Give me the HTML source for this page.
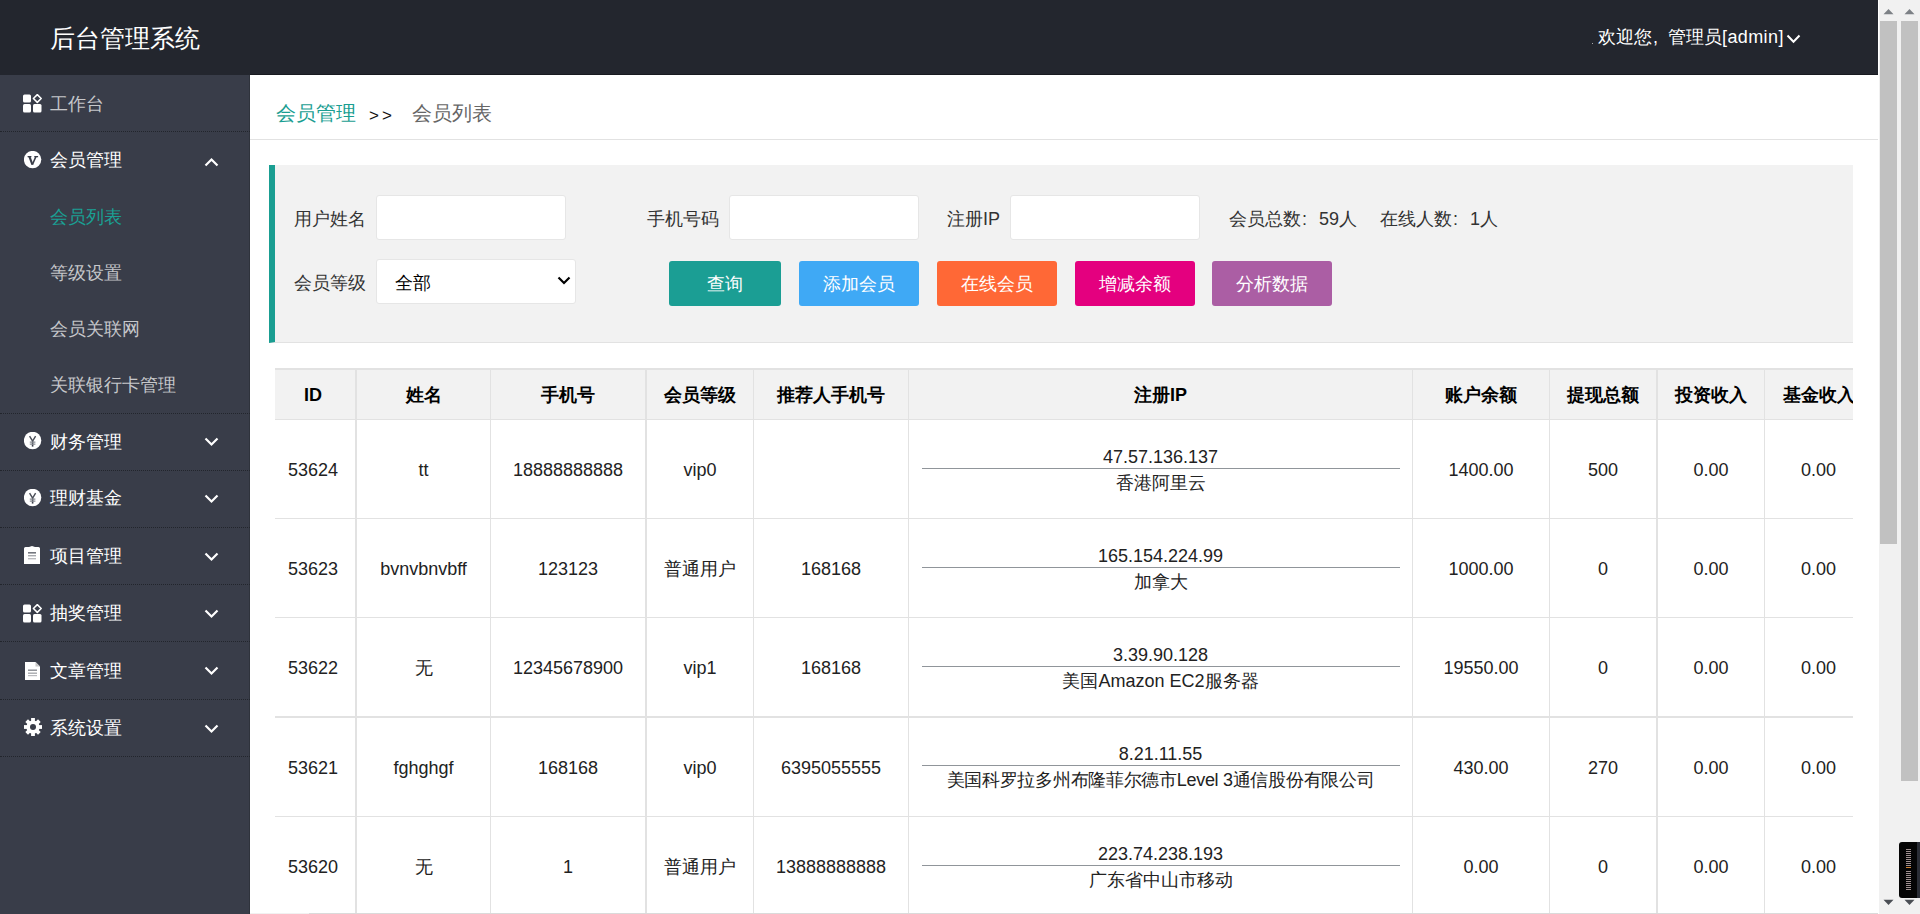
<!DOCTYPE html>
<html><head><meta charset="utf-8">
<style>
*{box-sizing:border-box;margin:0;padding:0}
html,body{width:1920px;height:914px;overflow:hidden;background:#fff;font-family:"Liberation Sans",sans-serif;color:#333}
.abs{position:absolute}
#hdr{position:absolute;left:0;top:0;width:1878px;height:75px;background:#23262E}
#logo{position:absolute;left:50px;top:20px;font-size:25px;line-height:36px;color:#fff;white-space:nowrap}
#user{position:absolute;left:1598px;top:24px;font-size:18px;line-height:26px;color:#fff;white-space:nowrap}
#side{position:absolute;left:0;top:75px;width:250px;height:839px;background:#393D49}
.sep{position:absolute;left:0;width:250px;height:0;border-top:1px dotted #22252c}
.nav{position:absolute;left:50px;font-size:18px;line-height:24px;white-space:nowrap;color:#fff}
.sub{color:rgba(255,255,255,.72)}
.ico{position:absolute;left:23px}
.chev{position:absolute;left:204px}
#main{position:absolute;left:250px;top:75px;width:1628px;height:839px;background:#fff;overflow:hidden}

.bc{font-size:20px;line-height:28px;white-space:nowrap}
.lbl{font-size:18px;line-height:26px;white-space:nowrap;color:#333}
.inp{height:45px;background:#fff;border:1px solid #e6e6e6;border-radius:3px}
.btn{top:261px;height:45px;border-radius:3px;color:#fff;font-size:18px;line-height:47px;text-align:center;white-space:nowrap}

.hl{left:0;width:1578px;background:#e2e2e2}
.vl{top:368px;height:546px;background:#e2e2e2}
.th{width:200px;text-align:center;font-size:18px;line-height:26px;font-weight:bold;color:#000;white-space:nowrap}
.td{width:200px;text-align:center;font-size:18px;line-height:26px;color:#222;white-space:nowrap}
.ipr{width:478px;height:1px;background:#90959a}
.fw{display:inline-block;width:18px;text-indent:1px}
</style></head><body>
<div id="hdr">
  <div id="logo">后台管理系统</div>
  <div id="user">欢迎您<span class="fw" style="width:16px">,</span>管理员<span style="letter-spacing:0.4px">[admin]</span></div>
</div>
<div id="side"></div>

<!-- sidebar -->
<div class="abs" style="left:249px;top:75px;width:1px;height:839px;background:#2f333c"></div>
<div class="abs" style="left:250px;top:74px;width:1628px;height:1px;background:#181a20"></div>
<svg class="ico" style="left:23px;top:94px" width="19" height="19" viewBox="0 0 19 19"><rect x="0" y="0.5" width="8" height="8" rx="1.5" fill="#fff"/><rect x="0" y="10" width="8" height="8.5" rx="1.5" fill="#fff"/><rect x="10" y="10" width="8.5" height="8.5" rx="1.5" fill="#fff"/><path d="M14.3 0.6 L18.2 4.5 L14.3 8.4 L10.4 4.5 Z" fill="none" stroke="#fff" stroke-width="1.5" stroke-linejoin="round"/></svg>
<div class="nav sub" style="top:92px">工作台</div>
<div class="sep" style="top:131px"></div>
<svg class="ico" style="left:24px;top:151px" width="18" height="18" viewBox="0 0 18 18"><circle cx="8.6" cy="8.6" r="8.7" fill="#fff"/><path d="M5.4 5.6 L8.4 13.6" stroke="#393D49" stroke-width="2.1" fill="none"/><path d="M8.4 13.6 L11.9 5.6" stroke="#393D49" stroke-width="1.5" fill="none"/><path d="M3.6 5.6 H7.4 M10.3 5.6 H14.1" stroke="#393D49" stroke-width="1.3" fill="none"/></svg>
<div class="nav" style="top:148px">会员管理</div>
<svg class="chev" style="left:204px;top:157px" width="15" height="10" viewBox="0 0 15 10"><path d="M1.5 8.5 L7.5 2.5 L13.5 8.5" fill="none" stroke="#fff" stroke-width="2.2"/></svg>
<div class="nav" style="top:205px;color:#1aa094">会员列表</div>
<div class="nav sub" style="top:261px">等级设置</div>
<div class="nav sub" style="top:317px">会员关联网</div>
<div class="nav sub" style="top:373px">关联银行卡管理</div>
<div class="sep" style="top:413px"></div>
<svg class="ico" style="left:24px;top:432px" width="18" height="18" viewBox="0 0 18 18"><circle cx="8.6" cy="8.5" r="8.7" fill="#fff"/><path d="M5.6 4.2 L8.6 9.2 L11.6 4.2" fill="none" stroke="#4a4e58" stroke-width="1.4"/><path d="M8.6 9.2 V14.6" fill="none" stroke="#393D49" stroke-width="1.6"/><path d="M5.8 10.2 H11.4 M5.8 12.2 H11.4" fill="none" stroke="#8a8d94" stroke-width="1.2"/></svg><div class="nav" style="top:430px">财务管理</div><svg class="chev" style="left:204px;top:437px" width="15" height="10" viewBox="0 0 15 10"><path d="M1.5 1.5 L7.5 7.5 L13.5 1.5" fill="none" stroke="#fff" stroke-width="2.2"/></svg><div class="sep" style="top:470px"></div>
<svg class="ico" style="left:24px;top:489px" width="18" height="18" viewBox="0 0 18 18"><circle cx="8.6" cy="8.5" r="8.7" fill="#fff"/><path d="M5.6 4.2 L8.6 9.2 L11.6 4.2" fill="none" stroke="#4a4e58" stroke-width="1.4"/><path d="M8.6 9.2 V14.6" fill="none" stroke="#393D49" stroke-width="1.6"/><path d="M5.8 10.2 H11.4 M5.8 12.2 H11.4" fill="none" stroke="#8a8d94" stroke-width="1.2"/></svg><div class="nav" style="top:486px">理财基金</div><svg class="chev" style="left:204px;top:494px" width="15" height="10" viewBox="0 0 15 10"><path d="M1.5 1.5 L7.5 7.5 L13.5 1.5" fill="none" stroke="#fff" stroke-width="2.2"/></svg><div class="sep" style="top:527px"></div>
<svg class="ico" style="left:24px;top:546px" width="16" height="18" viewBox="0 0 16 18"><path d="M1.5 1 H5 L8 0 L11 1 H14.5 Q16 1 16 2.5 V18 H0 V2.5 Q0 1 1.5 1 Z" fill="#fff"/><rect x="4" y="6" width="8" height="1.6" fill="#393D49" opacity=".7"/><rect x="4" y="9" width="8" height="1.4" fill="#393D49" opacity=".45"/><rect x="4" y="12" width="8" height="1.4" fill="#393D49" opacity=".35"/></svg><div class="nav" style="top:544px">项目管理</div><svg class="chev" style="left:204px;top:552px" width="15" height="10" viewBox="0 0 15 10"><path d="M1.5 1.5 L7.5 7.5 L13.5 1.5" fill="none" stroke="#fff" stroke-width="2.2"/></svg><div class="sep" style="top:584px"></div>
<svg class="ico" style="left:23px;top:604px" width="19" height="19" viewBox="0 0 19 19"><rect x="0" y="0.5" width="8" height="8" rx="1.5" fill="#fff"/><rect x="0" y="10" width="8" height="8.5" rx="1.5" fill="#fff"/><rect x="10" y="10" width="8.5" height="8.5" rx="1.5" fill="#fff"/><path d="M14.3 0.6 L18.2 4.5 L14.3 8.4 L10.4 4.5 Z" fill="none" stroke="#fff" stroke-width="1.5" stroke-linejoin="round"/></svg><div class="nav" style="top:601px">抽奖管理</div><svg class="chev" style="left:204px;top:609px" width="15" height="10" viewBox="0 0 15 10"><path d="M1.5 1.5 L7.5 7.5 L13.5 1.5" fill="none" stroke="#fff" stroke-width="2.2"/></svg><div class="sep" style="top:641px"></div>
<svg class="ico" style="left:25px;top:662px" width="15" height="18" viewBox="0 0 15 18"><path d="M0 0 H10.5 L15 4.5 V18 H0 Z" fill="#fff"/><path d="M10.5 0 V4.5 H15" fill="#c8c8c8"/><rect x="3" y="7.5" width="9" height="1.4" fill="#393D49" opacity=".6"/><rect x="3" y="10.5" width="9" height="1.4" fill="#393D49" opacity=".45"/><rect x="3" y="13" width="9" height="1.2" fill="#393D49" opacity=".35"/></svg><div class="nav" style="top:659px">文章管理</div><svg class="chev" style="left:204px;top:666px" width="15" height="10" viewBox="0 0 15 10"><path d="M1.5 1.5 L7.5 7.5 L13.5 1.5" fill="none" stroke="#fff" stroke-width="2.2"/></svg><div class="sep" style="top:699px"></div>
<svg class="ico" style="left:24px;top:718px" width="18" height="18" viewBox="0 0 18 18"><g transform="translate(9 9)" fill="#fff"><rect x="-1.9" y="-9" width="3.8" height="4" transform="rotate(0)"/><rect x="-1.9" y="-9" width="3.8" height="4" transform="rotate(45)"/><rect x="-1.9" y="-9" width="3.8" height="4" transform="rotate(90)"/><rect x="-1.9" y="-9" width="3.8" height="4" transform="rotate(135)"/><rect x="-1.9" y="-9" width="3.8" height="4" transform="rotate(180)"/><rect x="-1.9" y="-9" width="3.8" height="4" transform="rotate(225)"/><rect x="-1.9" y="-9" width="3.8" height="4" transform="rotate(270)"/><rect x="-1.9" y="-9" width="3.8" height="4" transform="rotate(315)"/><circle r="6.6"/></g><circle cx="9" cy="9" r="3" fill="#393D49"/></svg><div class="nav" style="top:716px">系统设置</div><svg class="chev" style="left:204px;top:724px" width="15" height="10" viewBox="0 0 15 10"><path d="M1.5 1.5 L7.5 7.5 L13.5 1.5" fill="none" stroke="#fff" stroke-width="2.2"/></svg><div class="sep" style="top:756px"></div>

<div id="main"></div>

<!-- breadcrumb -->
<div class="abs" style="left:250px;top:139px;width:1628px;height:1px;background:#e2e2e2"></div>
<div class="abs bc" style="left:276px;top:99px;color:#1a9e92">会员管理</div>
<div class="abs bc" style="left:369px;top:102px;color:#111;font-size:17px;letter-spacing:3px">&gt;&gt;</div>
<div class="abs bc" style="left:412px;top:99px;color:#666">会员列表</div>
<!-- search panel -->
<div class="abs" style="left:269px;top:165px;width:1584px;height:178px;background:#f2f2f2;border-left:6px solid #1a9e92;border-bottom:1px solid #e2e2e2"></div>
<div class="abs lbl" style="left:294px;top:206px">用户姓名</div>
<div class="abs inp" style="left:376px;top:195px;width:190px"></div>
<div class="abs lbl" style="left:647px;top:206px">手机号码</div>
<div class="abs inp" style="left:729px;top:195px;width:190px"></div>
<div class="abs lbl" style="left:947px;top:206px">注册IP</div>
<div class="abs inp" style="left:1010px;top:195px;width:190px"></div>
<div class="abs lbl" style="left:1229px;top:206px">会员总数<span class="fw">:</span>59人</div>
<div class="abs lbl" style="left:1380px;top:206px">在线人数<span class="fw">:</span>1人</div>
<div class="abs lbl" style="left:294px;top:270px">会员等级</div>
<div class="abs inp" style="left:376px;top:259px;width:200px"></div>
<div class="abs lbl" style="left:395px;top:270px;color:#000">全部</div>
<svg class="abs" style="left:557px;top:276px" width="14" height="9" viewBox="0 0 14 9"><path d="M1.5 1.5 L7 7 L12.5 1.5" fill="none" stroke="#000" stroke-width="2.2"/></svg>
<div class="abs btn" style="left:669px;width:112px;background:#1b9e94">查询</div>
<div class="abs btn" style="left:799px;width:120px;background:#3fa9f5">添加会员</div>
<div class="abs btn" style="left:937px;width:120px;background:#ff6836">在线会员</div>
<div class="abs btn" style="left:1075px;width:120px;background:#e4007f">增减余额</div>
<div class="abs btn" style="left:1212px;width:120px;background:#ab5ea4">分析数据</div>

<!-- table -->
<div id="tbl" class="abs" style="left:275px;top:0;width:1578px;height:914px;overflow:hidden">
<div class="abs" style="left:0;top:370px;width:1578px;height:49px;background:#f2f2f2"></div>
<div class="abs hl" style="top:368px;height:2px"></div>
<div class="abs hl" style="top:419px;height:1px"></div>
<div class="abs hl" style="top:518px;height:1px"></div>
<div class="abs hl" style="top:617px;height:1px"></div>
<div class="abs hl" style="top:716px;height:2px"></div>
<div class="abs hl" style="top:816px;height:1px"></div>

<div class="abs vl" style="left:80px;width:2px"></div>
<div class="abs vl" style="left:215px;width:1px"></div>
<div class="abs vl" style="left:370px;width:2px"></div>
<div class="abs vl" style="left:478px;width:1px"></div>
<div class="abs vl" style="left:633px;width:1px"></div>
<div class="abs vl" style="left:1137px;width:1px"></div>
<div class="abs vl" style="left:1274px;width:1px"></div>
<div class="abs vl" style="left:1381px;width:2px"></div>
<div class="abs vl" style="left:1489px;width:1px"></div>
<div class="abs th" style="left:-62px;top:382px">ID</div>
<div class="abs th" style="left:48.5px;top:382px">姓名</div>
<div class="abs th" style="left:193px;top:382px">手机号</div>
<div class="abs th" style="left:325px;top:382px">会员等级</div>
<div class="abs th" style="left:456px;top:382px">推荐人手机号</div>
<div class="abs th" style="left:785.5px;top:382px">注册IP</div>
<div class="abs th" style="left:1106px;top:382px">账户余额</div>
<div class="abs th" style="left:1228px;top:382px">提现总额</div>
<div class="abs th" style="left:1336px;top:382px">投资收入</div>
<div class="abs th" style="left:1443.5px;top:382px">基金收入</div>
<div class="abs td" style="left:-62px;top:457px">53624</div>
<div class="abs td" style="left:48.5px;top:457px">tt</div>
<div class="abs td" style="left:193px;top:457px">18888888888</div>
<div class="abs td" style="left:325px;top:457px">vip0</div>
<div class="abs td" style="left:635.5px;width:500px;top:444px">47.57.136.137</div>
<div class="abs ipr" style="left:647px;top:468px"></div>
<div class="abs td" style="left:635.5px;width:500px;top:470px">香港阿里云</div>
<div class="abs td" style="left:1106px;top:457px">1400.00</div>
<div class="abs td" style="left:1228px;top:457px">500</div>
<div class="abs td" style="left:1336px;top:457px">0.00</div>
<div class="abs td" style="left:1443.5px;top:457px">0.00</div>
<div class="abs td" style="left:-62px;top:556px">53623</div>
<div class="abs td" style="left:48.5px;top:556px">bvnvbnvbff</div>
<div class="abs td" style="left:193px;top:556px">123123</div>
<div class="abs td" style="left:325px;top:556px">普通用户</div>
<div class="abs td" style="left:456px;top:556px">168168</div>
<div class="abs td" style="left:635.5px;width:500px;top:543px">165.154.224.99</div>
<div class="abs ipr" style="left:647px;top:567px"></div>
<div class="abs td" style="left:635.5px;width:500px;top:569px">加拿大</div>
<div class="abs td" style="left:1106px;top:556px">1000.00</div>
<div class="abs td" style="left:1228px;top:556px">0</div>
<div class="abs td" style="left:1336px;top:556px">0.00</div>
<div class="abs td" style="left:1443.5px;top:556px">0.00</div>
<div class="abs td" style="left:-62px;top:655px">53622</div>
<div class="abs td" style="left:48.5px;top:655px">无</div>
<div class="abs td" style="left:193px;top:655px">12345678900</div>
<div class="abs td" style="left:325px;top:655px">vip1</div>
<div class="abs td" style="left:456px;top:655px">168168</div>
<div class="abs td" style="left:635.5px;width:500px;top:642px">3.39.90.128</div>
<div class="abs ipr" style="left:647px;top:666px"></div>
<div class="abs td" style="left:635.5px;width:500px;top:668px">美国Amazon EC2服务器</div>
<div class="abs td" style="left:1106px;top:655px">19550.00</div>
<div class="abs td" style="left:1228px;top:655px">0</div>
<div class="abs td" style="left:1336px;top:655px">0.00</div>
<div class="abs td" style="left:1443.5px;top:655px">0.00</div>
<div class="abs td" style="left:-62px;top:755px">53621</div>
<div class="abs td" style="left:48.5px;top:755px">fghghgf</div>
<div class="abs td" style="left:193px;top:755px">168168</div>
<div class="abs td" style="left:325px;top:755px">vip0</div>
<div class="abs td" style="left:456px;top:755px">6395055555</div>
<div class="abs td" style="left:635.5px;width:500px;top:741px">8.21.11.55</div>
<div class="abs ipr" style="left:647px;top:765px"></div>
<div class="abs td" style="left:635.5px;width:500px;top:767px;letter-spacing:-0.3px">美国科罗拉多州布隆菲尔德市Level 3通信股份有限公司</div>
<div class="abs td" style="left:1106px;top:755px">430.00</div>
<div class="abs td" style="left:1228px;top:755px">270</div>
<div class="abs td" style="left:1336px;top:755px">0.00</div>
<div class="abs td" style="left:1443.5px;top:755px">0.00</div>
<div class="abs td" style="left:-62px;top:854px">53620</div>
<div class="abs td" style="left:48.5px;top:854px">无</div>
<div class="abs td" style="left:193px;top:854px">1</div>
<div class="abs td" style="left:325px;top:854px">普通用户</div>
<div class="abs td" style="left:456px;top:854px">13888888888</div>
<div class="abs td" style="left:635.5px;width:500px;top:841px">223.74.238.193</div>
<div class="abs ipr" style="left:647px;top:865px"></div>
<div class="abs td" style="left:635.5px;width:500px;top:867px">广东省中山市移动</div>
<div class="abs td" style="left:1106px;top:854px">0.00</div>
<div class="abs td" style="left:1228px;top:854px">0</div>
<div class="abs td" style="left:1336px;top:854px">0.00</div>
<div class="abs td" style="left:1443.5px;top:854px">0.00</div>
</div>

<!-- scrollbars -->
<div class="abs" style="left:250px;top:913px;width:1628px;height:1px;background:#f1f1f1"></div>
<div class="abs" style="left:309px;top:913px;width:1569px;height:1px;background:#dadada"></div>
<div class="abs" style="left:1878px;top:0;width:1px;height:914px;background:#fff"></div>
<div class="abs" style="left:1879px;top:0;width:41px;height:914px;background:#f1f1f1"></div>
<div class="abs" style="left:1880px;top:21px;width:17px;height:523px;background:#c1c1c1"></div>
<div class="abs" style="left:1901px;top:21px;width:17px;height:760px;background:#c1c1c1"></div>
<svg class="abs" style="left:1883px;top:8px" width="11" height="7" viewBox="0 0 11 7"><path d="M0.5 6.2 L5.5 1 L10.5 6.2 Z" fill="#7d8186"/></svg>
<svg class="abs" style="left:1904px;top:8px" width="11" height="7" viewBox="0 0 11 7"><path d="M0.5 6.2 L5.5 1 L10.5 6.2 Z" fill="#7d8186"/></svg>
<svg class="abs" style="left:1883px;top:899px" width="11" height="7" viewBox="0 0 11 7"><path d="M0.5 0.8 L5.5 6 L10.5 0.8 Z" fill="#4b4f55"/></svg>
<svg class="abs" style="left:1904px;top:899px" width="11" height="7" viewBox="0 0 11 7"><path d="M0.5 0.8 L5.5 6 L10.5 0.8 Z" fill="#4b4f55"/></svg>
<div class="abs" style="left:1899px;top:842px;width:21px;height:56px;background:#050505;border-radius:3px 0 0 3px;border-right:3px solid #2a2d35"></div>
<div class="abs" style="left:1906px;top:849px;width:5px;height:41px;background:repeating-linear-gradient(#a09090 0 1px,transparent 1px 2px)"></div>
<div class="abs" style="left:1905px;top:866px;width:7px;height:4px;background:#050505"></div>
<div class="abs" style="left:1906px;top:867px;width:5px;height:1px;background:#d08030"></div>
<!-- header extras -->
<div class="abs" style="left:1592px;top:43px;width:1px;height:1px;background:#aaa"></div>
<svg class="abs" style="left:1786px;top:34px" width="15" height="10" viewBox="0 0 15 10"><path d="M1.5 1.5 L7.5 7.8 L13.5 1.5" fill="none" stroke="#fff" stroke-width="2"/></svg>

</body></html>
